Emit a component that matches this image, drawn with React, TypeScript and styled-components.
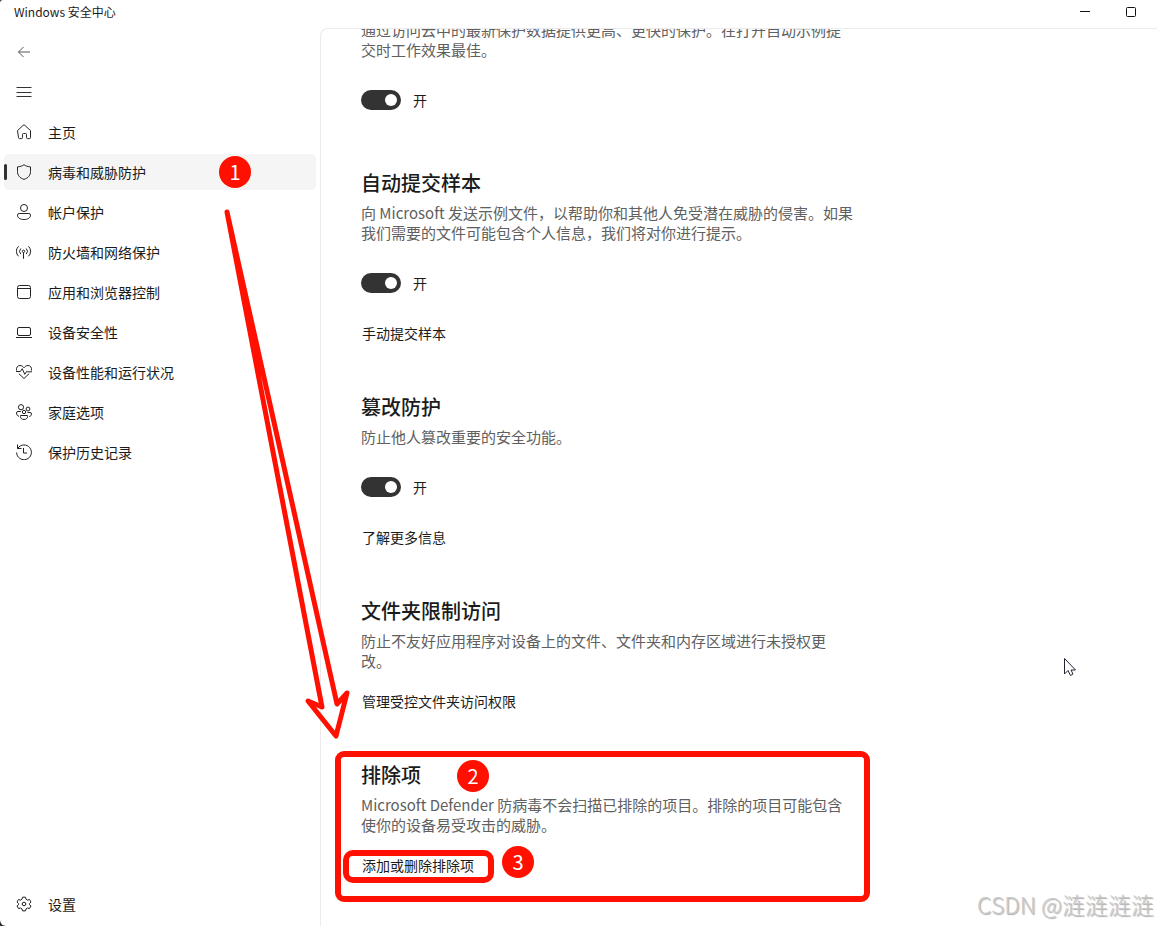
import React from 'react';
import styled, { createGlobalStyle } from 'styled-components';

const RED = '#ff1000';

const GlobalStyle = createGlobalStyle`
  * { box-sizing: border-box; }
  body {
    margin: 0;
    background: #2b2b2b;
    color: #1b1b1b;
    font-family: "Noto Sans CJK SC", "Open Sans", sans-serif;
    font-size: 14px;
    line-height: 20px;
  }
  button { font: inherit; color: inherit; background: none; border: 0; padding: 0; }
  h2, p, ul { margin: 0; padding: 0; }
`;

const Window = styled.div`
  position: relative;
  display: flex;
  flex-direction: column;
  height: 100vh;
  overflow: hidden;
  background: #fff;
  border-radius: 3px 0 0 6px;
`;

const TitleBar = styled.header`
  display: flex;
  align-items: center;
  justify-content: space-between;
  flex: none;
  height: 28px;
  padding: 0 3px 4px 14px;
  font-size: 12px;
`;

const CaptionButtons = styled.div`
  display: flex;
`;

const CaptionButton = styled.button`
  display: grid;
  place-items: center;
  width: 46px;
  height: 24px;
`;

const Body = styled.div`
  display: flex;
  flex: 1;
  min-height: 0;
`;

const Sidebar = styled.nav`
  display: flex;
  flex-direction: column;
  gap: 4px;
  flex: none;
  width: 320px;
  padding: 6px 4px 4px;
`;

const NavList = styled.ul`
  display: flex;
  flex: 1;
  flex-direction: column;
  gap: 4px;
  list-style: none;
`;

const NavButton = styled.button<{ $active?: boolean }>`
  position: relative;
  display: flex;
  align-items: center;
  gap: 16px;
  width: 100%;
  height: 36px;
  padding: 0 12px;
  border-radius: 5px;
  text-align: left;
  background: ${(p) => (p.$active ? '#f5f5f5' : 'transparent')};

  &::before {
    content: '';
    display: ${(p) => (p.$active ? 'block' : 'none')};
    position: absolute;
    left: 0;
    top: 10px;
    width: 3px;
    height: 16px;
    border-radius: 2px;
    background: #333;
  }
`;

const Content = styled.main`
  flex: 1;
  min-width: 0;
  overflow: hidden;
  padding-left: 40px;
  border: solid #ebebeb;
  border-width: 1px 0 0 1px;
  border-top-left-radius: 8px;
`;

const Scrolled = styled.div`
  display: flex;
  flex-direction: column;
  gap: 49px;
  max-width: 520px;
  margin-top: -9px;
`;

const Section = styled.section`
  position: relative;
  display: flex;
  flex-direction: column;
  align-items: flex-start;
`;

const Heading = styled.h2`
  margin-bottom: 6px;
  font-size: 20px;
  font-weight: 500;
  line-height: 28px;
`;

const Description = styled.p`
  font-size: 15px;
  line-height: 20px;
  color: #606060;
  white-space: pre-line;
`;

const ToggleRow = styled.label`
  display: flex;
  align-items: center;
  gap: 12px;
  height: 30px;
  margin: 25px 0 5px;
`;

const Switch = styled.input`
  appearance: none;
  width: 40px;
  height: 20px;
  margin: 0;
  padding: 4px;
  border-radius: 10px;
  background: #333;

  &::before {
    content: '';
    display: block;
    width: 12px;
    height: 12px;
    border-radius: 6px;
    background: #fff;
  }
  &:checked::before { margin-left: 20px; }
`;

const ActionLink = styled.a`
  margin: 20px 0 1px 1px;
  color: #1b1b1b;
  text-decoration: none;
`;

const Badge = styled.span<{ $left: number; $top: number }>`
  position: absolute;
  left: ${(p) => p.$left}px;
  top: ${(p) => p.$top}px;
  width: 32px;
  height: 32px;
  border-radius: 16px;
  background: ${RED};
  color: #fff;
  font-size: 20px;
  line-height: 32px;
  text-align: center;
`;

const SectionMark = styled.div`
  position: absolute;
  left: -26px;
  top: -10px;
  width: 535px;
  height: 151px;
  border: 6px solid ${RED};
  border-radius: 9px;
  pointer-events: none;
`;

const LinkMark = styled.div`
  position: absolute;
  left: -18px;
  top: 89px;
  width: 151px;
  height: 33px;
  border: 6px solid ${RED};
  border-radius: 10px;
  pointer-events: none;
`;

const Overlay = styled.svg<{ $left: number; $top: number }>`
  position: absolute;
  left: ${(p) => p.$left}px;
  top: ${(p) => p.$top}px;
  pointer-events: none;
`;

const Watermark = styled.div`
  position: absolute;
  right: 3px;
  bottom: 6px;
  font-size: 23px;
  font-weight: 300;
  line-height: 32px;
  color: #cacaca;
  text-shadow: 1px 1px 1px #aaa;
`;

const glyphs = {
  back: <path d="M14 8H2.5M7.5 3 2.5 8l5 5" stroke="#555" />,
  menu: <path d="M.5 3.5h15M.5 8.5h15M.5 12.5h15" stroke="#333" />,
  home: <path d="M1.5 6.6 7.2 1.3a1.2 1.2 0 0 1 1.6 0l5.7 5.3v7a1 1 0 0 1-1 1h-2a1 1 0 0 1-1-1v-3.1a1 1 0 0 0-1-1h-2a1 1 0 0 0-1 1v3.1a1 1 0 0 1-1 1h-2a1 1 0 0 1-1-1z" />,
  shield: <path d="M8 .7c1.8 1.3 3.9 2 6.5 2.2v4.6c0 3.8-2.2 6.4-6.5 7.9-4.3-1.5-6.5-4.1-6.5-7.9V2.9C4.1 2.7 6.200 2 8 .7z" />,
  account: (
    <>
      <circle cx="8" cy="4" r="3.500" />
      <path d="M3.200 9.500h9.600a1.700 1.700 0 0 1 1.700 1.700c0 2.700-2.600 4.300-6.500 4.300s-6.500-1.600-6.500-4.300a1.700 1.700 0 0 1 1.700-1.700z" />
    </>
  ),
  network: (
    <>
      <circle cx="7.500" cy="7.300" r="1.200" />
      <path d="M7.500 8.500v6.300M4.800 10.100a4 4 0 0 1 0-5.600M10.200 10.100a4 4 0 0 0 0-5.600M2.500 12.300a7 7 0 0 1 0-10M12.500 12.300a7 7 0 0 0 0-10" />
    </>
  ),
  app: (
    <>
      <rect x="1.500" y="1.500" width="13" height="13" rx="2" />
      <path d="M1.500 4.500h13" />
    </>
  ),
  device: (
    <>
      <rect x="1.500" y="3.500" width="13" height="8" rx="1.500" />
      <path d="M0 13.500h16" />
    </>
  ),
  health: (
    <>
      <path d="M.6 6.500C-.2 3.500 1.800 1.500 4 1.500c1.700 0 3 .9 4 2.300 1-1.400 2.300-2.300 4-2.300 2.200 0 4.200 2 3.400 5M2.900 9.700 8 14.500l5.100-4.800" />
      <path d="M0 7.500h4.300l1.900-2.800 2.600 5.600 2-3 .8.500H16" />
    </>
  ),
  family: (
    <>
      <circle cx="5" cy="3.200" r="2.600" />
      <circle cx="12" cy="5" r="1.900" />
      <circle cx="8" cy="8" r="1.700" />
      <path d="M4.500 11.500h7v1.200c0 1.700-1.500 2.800-3.500 2.800s-3.500-1.100-3.500-2.800zM4.800 7.500H2A1.500 1.500 0 0 0 .5 9c0 1.700 1 2.900 2.500 3.300M11.500 8.500H14A1.500 1.500 0 0 1 15.500 10c0 1.300-.8 2.200-2.200 2.500" />
    </>
  ),
  history: <path d="M1.500.5v4h4M1.800 4.300A7.400 7.400 0 1 1 .6 8.500M7.500 4v5h3.500" />,
  settings: (
    <>
      <circle cx="8" cy="8" r="1.800" />
      <path d="M6.500 1.200h3l.5 2 1.500.9 2-.6 1.500 2.600L13.500 7.500v1.200l1.500 1.300-1.500 2.600-2-.6-1.500.9-.5 2h-3l-.5-2-1.500-.9-2 .6L1 10l1.500-1.300V7.500L1 6.100l1.500-2.600 2 .6L6 3.200z" />
    </>
  ),
};

type GlyphName = keyof typeof glyphs;

const Icon = ({ name }: { name: GlyphName }) => (
  <svg width="16" height="16" viewBox="0 0 16 16" fill="none" stroke="#222" strokeLinejoin="round" aria-hidden="true">
    {glyphs[name]}
  </svg>
);

const navItems: { icon: GlyphName; label: string; step?: number }[] = [
  { icon: 'home', label: '主页' },
  { icon: 'shield', label: '病毒和威胁防护', step: 1 },
  { icon: 'account', label: '帐户保护' },
  { icon: 'network', label: '防火墙和网络保护' },
  { icon: 'app', label: '应用和浏览器控制' },
  { icon: 'device', label: '设备安全性' },
  { icon: 'health', label: '设备性能和运行状况' },
  { icon: 'family', label: '家庭选项' },
  { icon: 'history', label: '保护历史记录' },
];

const Toggle = () => (
  <ToggleRow>
    <Switch type="checkbox" role="switch" defaultChecked />
    开
  </ToggleRow>
);

export default function App() {
  return (
    <Window>
      <GlobalStyle />
      <TitleBar>
        <span>Windows 安全中心</span>
        <CaptionButtons>
          <CaptionButton aria-label="最小化">
            <svg width="10" height="10" fill="none" stroke="#111"><path d="M0 4.500h10" /></svg>
          </CaptionButton>
          <CaptionButton aria-label="最大化">
            <svg width="10" height="10" fill="none" stroke="#111"><rect x=".5" y=".5" width="9" height="9" rx="1" /></svg>
          </CaptionButton>
        </CaptionButtons>
      </TitleBar>
      <Body>
        <Sidebar>
          <NavButton aria-label="返回"><Icon name="back" /></NavButton>
          <NavButton aria-label="菜单"><Icon name="menu" /></NavButton>
          <NavList>
            {navItems.map((item) => (
              <li key={item.icon}>
                <NavButton $active={item.step !== undefined}>
                  <Icon name={item.icon} />
                  {item.label}
                  {item.step && <Badge $left={215} $top={2}>{item.step}</Badge>}
                </NavButton>
              </li>
            ))}
          </NavList>
          <NavButton><Icon name="settings" />设置</NavButton>
        </Sidebar>
        <Content>
          <Scrolled>
            <Section>
              <Description>{'通过访问云中的最新保护数据提供更高、更快的保护。在打开自动示例提\n交时工作效果最佳。'}</Description>
              <Toggle />
            </Section>
            <Section>
              <Heading>自动提交样本</Heading>
              <Description>{'向 Microsoft 发送示例文件，以帮助你和其他人免受潜在威胁的侵害。如果\n我们需要的文件可能包含个人信息，我们将对你进行提示。'}</Description>
              <Toggle />
              <ActionLink href="#submit">手动提交样本</ActionLink>
            </Section>
            <Section>
              <Heading>篡改防护</Heading>
              <Description>防止他人篡改重要的安全功能。</Description>
              <Toggle />
              <ActionLink href="#learn">了解更多信息</ActionLink>
            </Section>
            <Section>
              <Heading>文件夹限制访问</Heading>
              <Description>{'防止不友好应用程序对设备上的文件、文件夹和内存区域进行未授权更\n改。'}</Description>
              <ActionLink href="#folders">管理受控文件夹访问权限</ActionLink>
            </Section>
            <Section>
              <Heading>排除项</Heading>
              <Description>{'Microsoft Defender 防病毒不会扫描已排除的项目。排除的项目可能包含\n使你的设备易受攻击的威胁。'}</Description>
              <ActionLink href="#exclusions">添加或删除排除项</ActionLink>
              <SectionMark />
              <LinkMark />
              <Badge $left={96} $top={-1}>2</Badge>
              <Badge $left={141} $top={85}>3</Badge>
            </Section>
          </Scrolled>
        </Content>
      </Body>
      <Overlay $left={220} $top={205} width="140" height="540" fill="none" stroke={RED} strokeWidth="5" strokeLinejoin="round" aria-hidden="true">
        <path d="M7 7 102 502 88 496l28 35 11-43-10 11z" />
      </Overlay>
      <Overlay $left={1064} $top={658} width="13" height="19" fill="#fff" stroke="#222233" aria-hidden="true">
        <path d="M.5.5v15.500l3.500-3.500 2.500 5 2.500-1.500-2-4h4.500z" />
      </Overlay>
      <Watermark>CSDN @涟涟涟涟</Watermark>
    </Window>
  );
}
